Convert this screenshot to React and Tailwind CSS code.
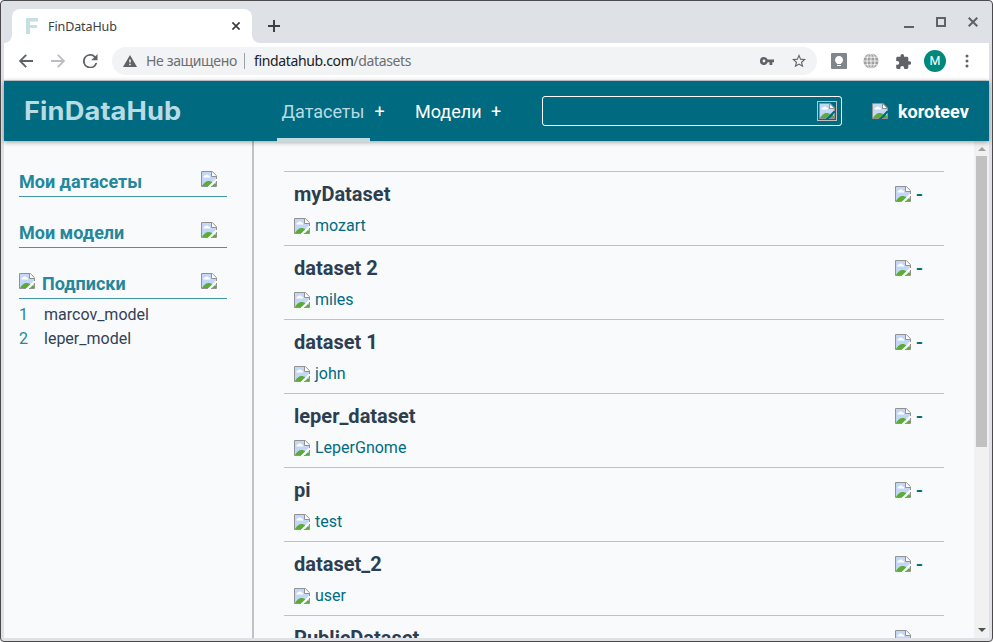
import React from "react";

const ROBOTO = "font-['Roboto',sans-serif]";
const SYSTEM = "font-['Noto_Sans','Open_Sans',sans-serif]";

const datasets = [
  ["myDataset", "mozart"],
  ["dataset 2", "miles"],
  ["dataset 1", "john"],
  ["leper_dataset", "LeperGnome"],
  ["pi", "test"],
  ["dataset_2", "user"],
  ["PublicDataset", null],
];

function BrokenImage({ className = "" }) {
  return (
    <svg viewBox="0 0 16 16" className={"h-4 w-4 shrink-0 " + className}>
      <path d="M1 1H10.5V6H15V7.5L7.5 15H1Z" fill="#c4d6f6" />
      <path d="M2.5 6.5V5.6C2.6 5 3.3 4.5 4 4.6C4.6 3 7 3 7.5 4.6C8.6 4.4 9.2 5.4 9.2 6.5Z" fill="#fff" />
      <path d="M1 15C2.5 12 5 10 7.5 10C9.3 10 10.5 10.7 11.3 11.3L7.5 15Z" fill="#5aac35" />
      <path d="M11 1V5H15Z" fill="#fff" />
      <path d="M7 15.5H.5V.5H11.3L15.5 4.7V8" fill="none" stroke="#929292" />
      <path d="M10.5 1V5.5H15" fill="none" stroke="#929292" />
      <path d="M11 15L15 11V15Z" fill="#5aac35" />
      <path d="M15 10.5V12.8L13.6 12.2Z" fill="#c4d6f6" />
      <path d="M10 15.5H15.5V10" fill="none" stroke="#929292" />
    </svg>
  );
}

function TitleBar() {
  return (
    <div className="flex h-[42px] shrink-0 items-end">
      <div className="relative ml-[11px] flex h-[34px] w-[240px] items-center rounded-t-[8px] bg-white">
        <svg viewBox="0 0 8 8" className="absolute bottom-0 -left-2 h-2 w-2"><path d="M8 0V8H0A8 8 0 0 0 8 0Z" fill="#fff" /></svg>
        <svg viewBox="0 0 8 8" className="absolute -right-2 bottom-0 h-2 w-2"><path d="M0 0V8H8A8 8 0 0 1 0 0Z" fill="#fff" /></svg>
        <svg viewBox="0 0 12 16" className="ml-[14px] h-4 w-3">
          <path d="M0 0H12V3.5H4V7H11V10H4V16H0Z" fill="#c5dfe5" />
        </svg>
        <span className={"mt-[2px] ml-[10px] w-[160px] text-[12.5px] tracking-[-0.1px] text-[#3c4043] " + SYSTEM}>FinDataHub</span>
        <svg viewBox="0 0 8 8" className="ml-[24px] h-2 w-2"><path d="M.4.4L7.6 7.6M7.6.4L.4 7.6" stroke="#3c4043" strokeWidth="1.7" /></svg>
      </div>
      <svg viewBox="0 0 12 12" className="mb-[11px] ml-[16px] h-3 w-3"><path d="M6 0V12M0 6H12" stroke="#3c4043" strokeWidth="2" /></svg>
      <div className="mr-[14px] mb-[15px] ml-auto flex h-[11px] items-end gap-[22px]">
        <span className="h-[2px] w-[10px] bg-[#5f6368]" />
        <span className="mb-px h-[10px] w-[10px] border-2 border-[#5f6368]" />
        <svg viewBox="0 0 10 10" className="mb-px h-[10px] w-[10px]"><path d="M.7.7L9.3 9.3M9.3.7L.7 9.3" stroke="#5f6368" strokeWidth="2" /></svg>
      </div>
    </div>
  );
}

function Toolbar() {
  return (
    <div className="mx-[3px] flex h-[38px] shrink-0 items-center border-b border-[#cfd6da] bg-white">
      <svg viewBox="0 0 14 14" className="mb-px ml-[15px] h-[14px] w-[14px]"><path d="M14 7H1.2M7.2.8L1 7L7.2 13.2" fill="none" stroke="#5f6368" strokeWidth="1.9" /></svg>
      <svg viewBox="0 0 14 14" className="mb-px ml-[18px] h-[14px] w-[14px]"><path d="M0 7H12.8M6.8.8L13 7L6.8 13.2" fill="none" stroke="#bcbec1" strokeWidth="1.9" /></svg>
      <svg viewBox="4 4 16 16" className="mb-px ml-[18px] h-[14.5px] w-[14.5px]"><path d="M17.65 6.35A8 8 0 1 0 19.73 14h-2.08A6 6 0 1 1 12 6c1.66 0 3.14.69 4.22 1.78L13 11h7V4z" fill="#5f6368" /></svg>
      <div className="mb-px ml-[14.5px] flex h-7 w-[705px] shrink-0 items-center rounded-full bg-[#f1f3f4]">
        <svg viewBox="0 0 14 12" className="ml-[11px] h-3 w-[14px]">
          <path d="M7 0L14 12H0Z" fill="#5f6368" /><path d="M6.2 4.5H7.8V7.5H6.2ZM6.2 8.8H7.8V10.2H6.2Z" fill="#f1f3f4" />
        </svg>
        <span className={"mb-px ml-[9px] w-[91px] text-[14px] tracking-[-0.36px] whitespace-nowrap text-[#6b6f73] " + SYSTEM}>Не защищено</span>
        <span className="ml-[7px] h-4 w-px bg-[#9da1a6]" />
        <span className={"mb-px ml-[9px] text-[14px] tracking-[-0.36px] whitespace-nowrap text-[#202124] " + SYSTEM}>
          findatahub.com<span className="text-[#6b6f73]">/datasets</span>
        </span>
        <svg viewBox="0 0 14 8" className="mr-[18px] mb-px ml-auto h-2 w-[14px]">
          <path fillRule="evenodd" d="M4 0A4 4 0 1 0 7.7 5.3H9.5V8H12.3V5.3H14V2.6H7.7A4 4 0 0 0 4 0ZM4 2.6A1.4 1.4 0 1 1 4 5.4A1.4 1.4 0 0 1 4 2.6Z" fill="#5f6368" />
        </svg>
        <svg viewBox="2 2 20 19" className="mr-[11px] h-[13.3px] w-[14px]">
          <path d="M22 9.24l-7.19-.62L12 2 9.19 8.63 2 9.24l5.46 4.73L5.82 21 12 17.27 18.18 21l-1.63-7.03zM12 15.4l-3.76 2.27 1-4.28-3.32-2.88 4.38-.38L12 6.1l1.71 4.04 4.38.38-3.32 2.88 1 4.28z" fill="#5f6368" />
        </svg>
      </div>
      <svg viewBox="0 0 16 16" className="mb-px ml-[14px] h-4 w-4"><rect width="16" height="16" rx="1" fill="#80868b" /><path d="M6 10.5A4 4 0 1 1 10 10.5V11H6Z" fill="#fff" /><path d="M6 12H10V13H6Z" fill="#fff" /></svg>
      <svg viewBox="0 0 16 16" className="mb-px ml-[16px] h-4 w-4">
        <circle cx="8" cy="8" r="7.6" fill="#a0a0a0" />
        <path d="M8 0V16M0 8H16M1.5 4.2H14.5M1.5 11.8H14.5" stroke="#fff" strokeWidth=".8" />
        <ellipse cx="8" cy="8" rx="4" ry="7.6" fill="none" stroke="#fff" strokeWidth=".8" />
      </svg>
      <svg viewBox="2 1 20.5 21" className="mb-px ml-[17px] h-[15px] w-[15px]"><path d="M20.5 11H19V7c0-1.1-.9-2-2-2h-4V3.5a2.5 2.5 0 0 0-5 0V5H4c-1.1 0-1.99.9-1.99 2v3.8H3.5c1.49 0 2.7 1.21 2.7 2.7s-1.21 2.7-2.7 2.7H2V20c0 1.1.9 2 2 2h3.8v-1.5c0-1.49 1.21-2.7 2.7-2.7s2.7 1.21 2.7 2.7V22H17c1.1 0 2-.9 2-2v-4h1.5a2.5 2.5 0 0 0 0-5z" fill="#5f6368" /></svg>
      <span className={"mb-px ml-[13px] flex h-[22px] w-[22px] items-center justify-center rounded-full bg-[#00897b] text-[12.5px] text-white " + ROBOTO}>M</span>
      <svg viewBox="0 0 4 14" className="mb-px ml-[19px] h-[14px] w-1"><circle cx="2" cy="2" r="1.5" fill="#5f6368" /><circle cx="2" cy="7" r="1.5" fill="#5f6368" /><circle cx="2" cy="12" r="1.5" fill="#5f6368" /></svg>
    </div>
  );
}

function SiteHeader() {
  return (
    <header className="relative z-10 mx-[3px] flex h-[60px] shrink-0 items-center bg-[#006b80] text-[18px] text-white shadow-[0_1px_5px_rgba(0,0,0,0.4)]">
      <div className="flex w-[273px] pl-[20px]">
        <span className="origin-left scale-x-[1.09] font-['Inter',sans-serif] text-[25px] leading-none font-bold tracking-[0.1px] text-[#b9dbe3]">FinDataHub</span>
      </div>
      <nav className="flex h-[60px] w-[265px] items-center whitespace-nowrap">
        <span className="relative flex h-full w-[93px] items-center pl-[4.5px] text-[#b9dbe3]">
          Датасеты
          <span className="absolute -bottom-px left-0 h-1 w-[93px] bg-[#c2dbe1]" />
        </span>
        <span className="ml-[4.5px] w-[40.5px]">+</span>
        <span className="w-[76px]">Модели</span>
        <span>+</span>
      </nav>
      <div className="flex h-[30px] w-[300px] items-center justify-end rounded-[3px] border border-white pr-[4px]">
        <span className="flex h-5 w-5 items-center justify-center border border-[#c0c0c0]"><BrokenImage /></span>
      </div>
      <BrokenImage className="ml-[30px]" />
      <span className="ml-[10px] font-bold">koroteev</span>
    </header>
  );
}

function SideHeading({ children, icon }) {
  return (
    <div className="mb-[24px] flex h-[27px] w-[208px] items-start border-b border-[#3f97a9] text-[18px] leading-[24px] font-bold text-[#24879b]">
      {icon && <BrokenImage className="mt-px mr-[7px]" />}
      <span>{children}</span>
      <BrokenImage className="mt-px mr-[10px] ml-auto" />
    </div>
  );
}

export default function App() {
  return (
    <div className={"flex h-[642px] w-[993px] flex-col overflow-hidden rounded-[4px] border border-[#4b494c] bg-[#dee1e6] " + ROBOTO}>
      <TitleBar />
      <Toolbar />
      <SiteHeader />
      <main className="mx-[3px] flex h-[497px] shrink-0 overflow-hidden bg-[#f8fafc]">
        <aside className="h-full w-[250px] shrink-0 border-r-2 border-[#c2c2c2] pt-[29px] pl-[15px]">
          <SideHeading>Мои датасеты</SideHeading>
          <SideHeading>Мои модели</SideHeading>
          <SideHeading icon>Подписки</SideHeading>
          <div className="mt-[-20px] text-[16px] leading-6 text-[#334155]">
            <div className="flex"><span className="w-[25px] text-[#24879b]">1</span>marcov_model</div>
            <div className="flex"><span className="w-[25px] text-[#24879b]">2</span>leper_model</div>
          </div>
        </aside>
        <section className="ml-[30px] w-[660px] pt-[30px]">
          {datasets.map(([name, owner]) => (
            <div key={name} className="flex h-[74px] justify-between border-t border-[#bfc2c5] px-[10px]">
              <div>
                <div className="mt-[10px] text-[20px] leading-6 font-bold text-[#2c3e50]">{name}</div>
                {owner && (
                  <div className="mt-[8px] flex items-center text-[16px] leading-6 text-[#006b80]">
                    <BrokenImage className="mr-[5px]" />{owner}
                  </div>
                )}
              </div>
              <div className="mt-[10px] mr-[11px] flex h-6 w-[28px] items-center text-[20px] text-[#006b80]">
                <BrokenImage className="mr-[5px]" />{owner && <span className="font-medium">-</span>}
              </div>
            </div>
          ))}
        </section>
        <div className="ml-auto flex h-full w-[15px] flex-col items-center bg-[#f1f1f1]">
          <svg viewBox="0 0 8 4" className="mt-[6px] h-1 w-2"><path d="M4 0L8 4H0Z" fill="#a0a0a0" /></svg>
          <div className="mt-[5px] h-[291px] w-[11px] bg-[#c1c1c1]" />
          <svg viewBox="0 0 8 4" className="mt-auto mb-[6px] h-1 w-2"><path d="M4 4L8 0H0Z" fill="#505050" /></svg>
        </div>
      </main>
    </div>
  );
}
